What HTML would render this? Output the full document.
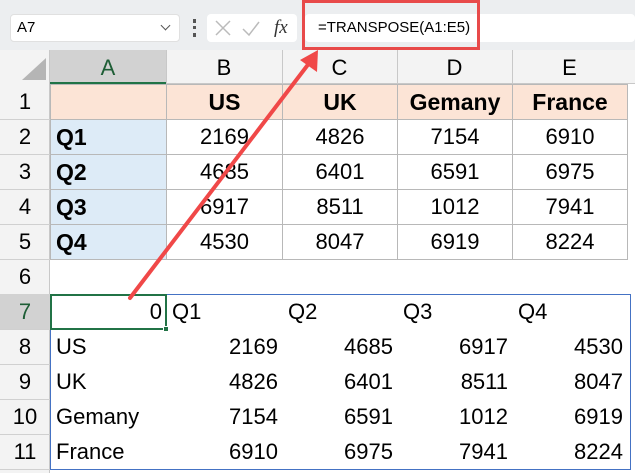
<!DOCTYPE html>
<html><head><style>
body{margin:0;width:635px;height:473px;overflow:hidden;background:#fff;font-family:"Liberation Sans",sans-serif;position:relative}
.a{position:absolute;box-sizing:border-box}
.t{font-size:22px;line-height:35px;color:#000;white-space:nowrap}
</style></head><body>
<div class="a" style="left:0;top:0;width:635px;height:50px;background:#eceef0"></div>
<div class="a" style="left:10px;top:14px;width:170px;height:28px;background:#fff;border-radius:4px;border:1px solid #e0e0e0"></div>
<div class="a t" style="left:17px;top:11px;font-size:15px;line-height:34px">A7</div>
<div class="a" style="left:162px;top:22px;width:7px;height:7px;border-right:1.5px solid #555;border-bottom:1.5px solid #555;transform:rotate(45deg)"></div>
<div class="a" style="left:193px;top:19px;width:3px;height:18px;border-left:3px dotted #555"></div>
<div class="a" style="left:207px;top:14px;width:90px;height:28px;background:#fff;border-radius:4px"></div>
<svg class="a" style="left:213px;top:18px" width="60" height="22"><path d="M3 3L17 17M17 3L3 17" stroke="#bbb" stroke-width="1.5"/><path d="M30 11L36 17L46 4" stroke="#bbb" stroke-width="1.5" fill="none"/></svg>
<div class="a" style="left:274px;top:14px;font:italic 19px 'Liberation Serif',serif;line-height:28px;color:#333">fx</div>
<div class="a" style="left:305px;top:14px;width:330px;height:28px;background:#fff;border-radius:4px"></div>
<div class="a t" style="left:318px;top:11px;font-size:15px;line-height:34px">=TRANSPOSE(A1:E5)</div>
<div class="a" style="left:302px;top:0;width:178px;height:50px;border:3px solid #e84a4a"></div>
<div class="a" style="left:0;top:50px;width:635px;height:34px;background:#f3f3f3;border-bottom:1px solid #c8c8c8"></div>
<div class="a" style="left:0;top:50px;width:50px;height:423px;background:#f3f3f3;border-right:1px solid #c8c8c8"></div>
<svg class="a" style="left:18px;top:56px" width="30" height="26"><path d="M28 2L28 24L4 24Z" fill="#b5b5b5"/></svg>
<div class="a" style="left:50px;top:50px;width:116px;height:34px;background:#d2d2d2;border-bottom:2px solid #217346"></div>
<div id="g"></div>
<script>
var cols=[50,166,282,397,512,627],L=["A","B","C","D","E"],h="";
for(var i=0;i<5;i++){h+='<div class="a t" style="left:'+cols[i]+'px;top:50px;width:'+(cols[i+1]-cols[i])+'px;text-align:center;line-height:36px;font-size:22px;'+(i==0?'color:#1e5e36':'')+'">'+L[i]+'</div>';
 if(i>0)h+='<div class="a" style="left:'+cols[i]+'px;top:50px;width:1px;height:34px;background:#c8c8c8"></div>';}
function ry(r){return 84+(r-1)*35}
for(var r=1;r<=11;r++){h+='<div class="a t" style="left:0;top:'+ry(r)+'px;width:50px;text-align:center;'+(r==7?'background:#d2d2d2;color:#1e5e36;':'')+'">'+r+'</div>';
 h+='<div class="a" style="left:0;top:'+(ry(r)+35)+'px;width:50px;height:1px;background:#d0d0d0"></div>';}
var d=[["","US","UK","Gemany","France"],["Q1",2169,4826,7154,6910],["Q2",4685,6401,6591,6975],["Q3",6917,8511,1012,7941],["Q4",4530,8047,6919,8224]];
for(var r=0;r<5;r++)for(var c=0;c<5;c++){var bg=r==0?'#fce4d6':(c==0?'#ddebf7':'#fff');
 h+='<div class="a t" style="left:'+cols[c]+'px;top:'+ry(r+1)+'px;width:'+(cols[c+1]-cols[c]+1)+'px;height:36px;background:'+bg+';border:1px solid #b8b8b8;font-weight:'+((r==0||c==0)?'bold':'normal')+';text-align:'+(c==0?'left':'center')+';padding-left:'+(c==0?5:0)+'px;font-size:'+((r==0||c==0)?23:22)+'px;line-height:34px">'+d[r][c]+'</div>';}
h+='<div class="a" style="left:50px;top:294px;width:581px;height:176px;border:1px solid #4472c4"></div>';
h+='<div class="a" style="left:50px;top:294px;width:117px;height:36px;border:2px solid #217346"></div><div class="a" style="left:163px;top:326px;width:6px;height:6px;background:#217346;border:1px solid #fff"></div>';
h+='<div class="a t" style="left:50px;top:294px;width:112px;text-align:right">0</div>';
["Q1","Q2","Q3","Q4"].forEach(function(q,i){h+='<div class="a t" style="left:'+(cols[i+1]+6)+'px;top:294px">'+q+'</div>'});
for(var k=1;k<5;k++){h+='<div class="a t" style="left:56px;top:'+ry(7+k)+'px">'+d[0][k]+'</div>';
 for(var q=1;q<5;q++)h+='<div class="a t" style="left:'+cols[q]+'px;top:'+ry(7+k)+'px;width:'+(cols[q+1]-cols[q]-4)+'px;text-align:right">'+d[q][k]+'</div>';}
document.getElementById('g').innerHTML=h;
</script>
<svg class="a" style="left:0;top:0" width="635" height="473"><line x1="130" y1="298" x2="310" y2="62" stroke="#f04848" stroke-width="4" stroke-linecap="round"/><path d="M318 50L317 72L300 60Z" fill="#f04848"/></svg>
</body></html>
